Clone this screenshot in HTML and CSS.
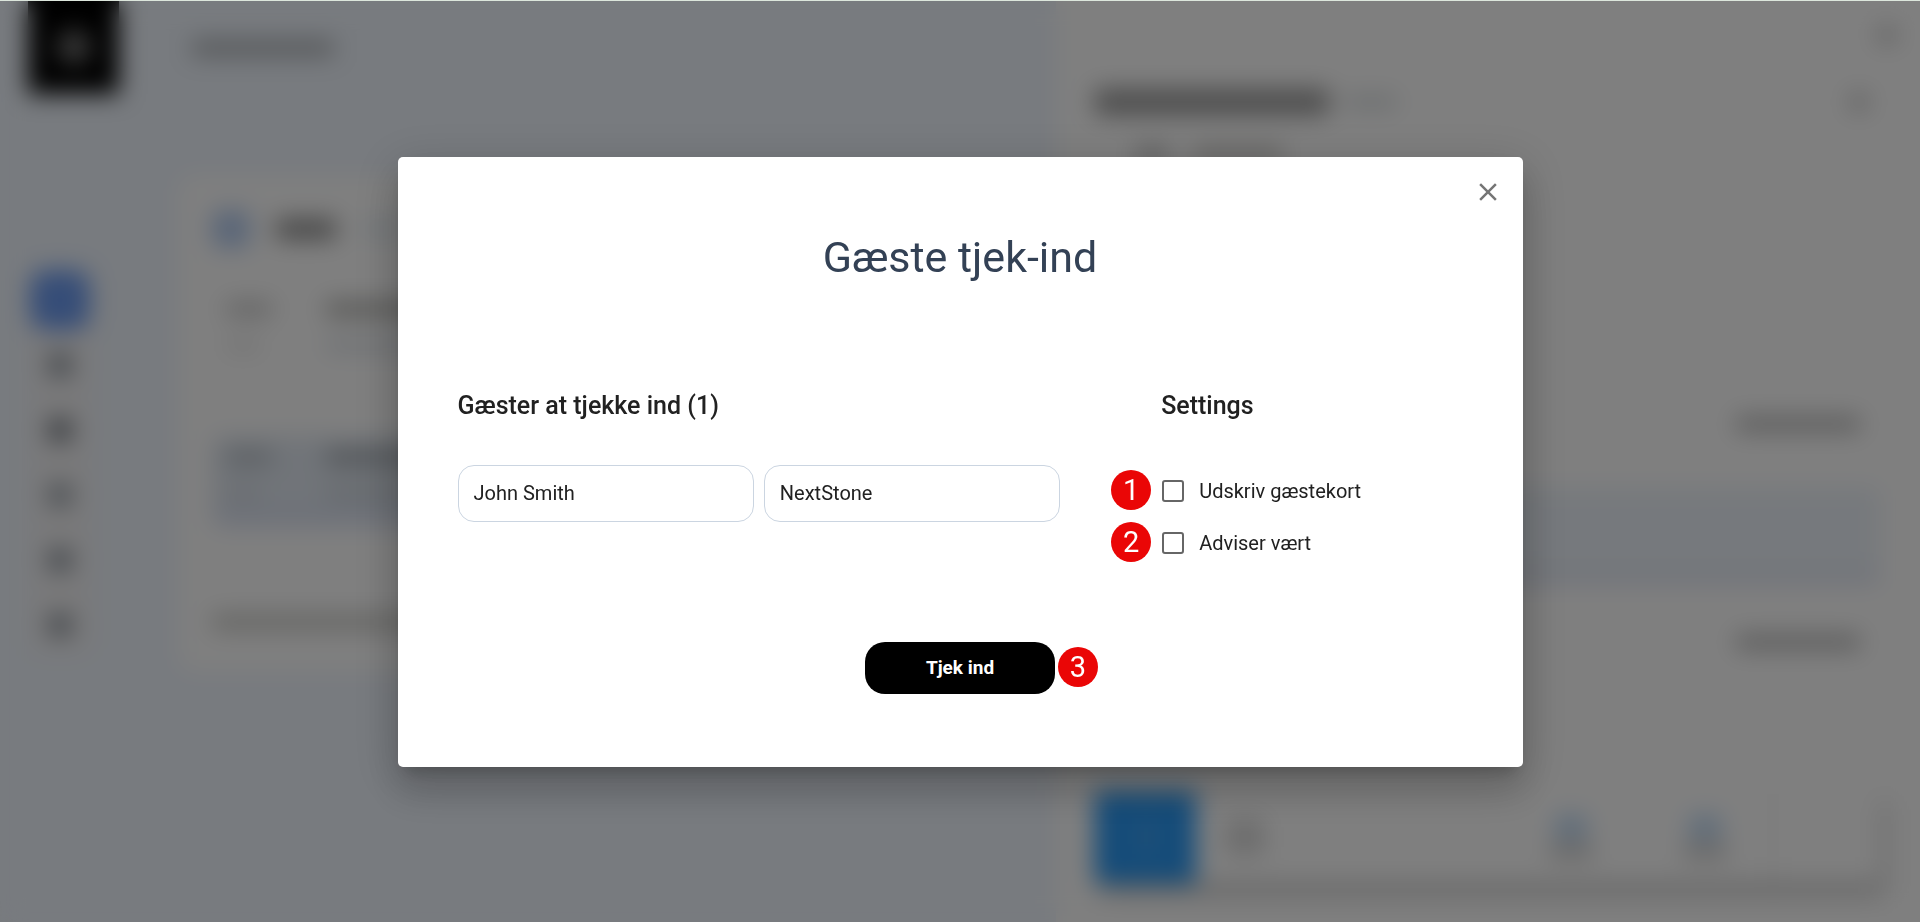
FILE: index.html
```html
<!DOCTYPE html>
<html lang="da">
<head>
<meta charset="utf-8">
<title>Gæste tjek-ind</title>
<link rel="stylesheet" href="styles.css">
</head>
<body>
<div class="app" aria-hidden="true">
  <aside class="sidebar">
    <div class="logo"><span class="logo-mark"></span></div>
    <div class="nav">
      <span class="nav-active"></span>
      <span class="nav-item"></span>
      <span class="nav-item nav-strong"></span>
      <span class="nav-item nav-soft"></span>
      <span class="nav-item"></span>
      <span class="nav-item"></span>
    </div>
  </aside>
  <div class="main">
    <span class="bar crumb"></span>
    <div class="card">
      <div class="card-head"><span class="card-icon"></span><span class="bar card-title"></span><span class="bar card-tag"></span></div>
      <div class="slot">
        <div class="slot-time"><span class="bar"></span><span class="bar faint"></span></div>
        <div class="slot-text"><span class="bar strong"></span><span class="bar cool"></span></div>
      </div>
      <div class="slot slot-on">
        <div class="slot-time"><span class="bar"></span><span class="bar faint"></span></div>
        <div class="slot-text"><span class="bar strong"></span><span class="bar cool"></span></div>
      </div>
      <span class="bar card-foot"></span>
    </div>
  </div>
  <div class="panel">
    <div class="panel-top"><span class="dot"></span></div>
    <div class="panel-head"><span class="bar heading"></span><span class="bar subheading"></span><span class="dot"></span></div>
    <div class="panel-meta"><span class="bar"></span><span class="bar wide"></span></div>
    <div class="action"><span class="bar"></span></div>
    <div class="band"></div>
    <div class="action"><span class="bar"></span></div>
    <div class="toolbar">
      <span class="tile"><span class="tile-mark"></span></span>
      <span class="tool-label"></span>
      <span class="tool tool-first"><i></i><b></b></span>
      <span class="tool"><i></i><b></b></span>
      <span class="tool tool-last"></span>
    </div>
  </div>
</div>

<div class="overlay">
  <form class="dialog" role="dialog" aria-labelledby="dialog-title">
    <button class="close" type="button" aria-label="Luk">
      <svg viewBox="0 0 24 24" width="30" height="30" fill="currentColor"><path d="M19 6.41 17.59 5 12 10.59 6.41 5 5 6.41 10.59 12 5 17.59 6.41 19 12 13.41 17.59 19 19 17.59 13.41 12z"/></svg>
    </button>
    <h1 class="title" id="dialog-title">Gæste tjek-ind</h1>
    <div class="columns">
      <section>
        <h2 class="subtitle">Gæster at tjekke ind (1)</h2>
        <div class="fields">
          <input class="field" type="text" value="John Smith" aria-label="Navn">
          <input class="field" type="text" value="NextStone" aria-label="Firma">
        </div>
      </section>
      <section>
        <h2 class="subtitle">Settings</h2>
        <div class="option">
          <input class="check" type="checkbox" id="print"><label for="print">Udskriv gæstekort</label>
          <span class="step step-before">1</span>
        </div>
        <div class="option">
          <input class="check" type="checkbox" id="notify"><label for="notify">Adviser vært</label>
          <span class="step step-before">2</span>
        </div>
      </section>
    </div>
    <div class="actions">
      <div class="submit-wrap">
        <button class="submit" type="submit">Tjek ind</button>
        <span class="step step-after">3</span>
      </div>
    </div>
  </form>
</div>
</body>
</html>
```
FILE: styles.css
```css
* { box-sizing: border-box; }

body {
  margin: 0;
  font-family: Roboto, "Liberation Sans", sans-serif;
  color: #212121;
  background: #f0f6fe;
  overflow: hidden;
}

/* Page behind the dialog */
.app {
  display: grid;
  grid-template-columns: 178px minmax(0, 1fr) 45%;
  height: 100vh;
  background: #f0f6fe;
  overflow: hidden;
}

.bar {
  display: block;
  height: 14px;
  border-radius: 4px;
  background: #c4c4c4;
}

.sidebar { padding-left: 28px; }
.logo {
  display: flex;
  justify-content: center;
  align-items: center;
  width: 91px;
  height: 94px;
  background: #000;
}
.logo-mark { width: 34px; height: 34px; border-radius: 50%; background: #777; }
.nav {
  display: flex;
  flex-direction: column;
  align-items: center;
  gap: 41px;
  width: 64px;
  margin-top: 176px;
  padding-bottom: 16px;
  border-radius: 16px;
  background: #f3f3f5;
}
.nav-active {
  width: 60px;
  height: 60px;
  margin-bottom: -18px;
  border-radius: 16px;
  background: #6c9bf0;
}
.nav-item { width: 24px; height: 24px; border-radius: 8px; background: #8c949d; }
.nav-strong { background: #747a82; }
.nav-soft { background: #98a0a8; }

.main { padding: 40px 24px 0 0; }
.crumb { width: 142px; height: 16px; margin-left: 14px; background: #aaaeb2; }
.card {
  height: 497px;
  margin-top: 119px;
  padding: 36px 34px;
  border-radius: 16px;
  background: #fff;
}
.card-head { display: flex; align-items: center; gap: 26px; height: 36px; }
.card-icon { width: 38px; height: 38px; border-radius: 8px; background: #b4ccf0; }
.card-title { width: 60px; height: 20px; background: #8c8c8c; }
.card-tag { width: 40px; height: 16px; background: #e6eef4; }
.slot {
  display: grid;
  grid-template-columns: 84px 1fr;
  gap: 16px;
  height: 90px;
  margin-top: 41px;
  padding: 14px 0 0 14px;
  border-radius: 12px;
}
.slot-on { margin-top: 58px; background: #e2e9f2; border-bottom: 16px solid #d8e0f2; }
.slot-time, .slot-text { display: flex; flex-direction: column; gap: 22px; }
.slot-time .bar { width: 46px; background: #c4c4c4; }
.slot-time .faint { width: 34px; background: #e8e8e8; }
.slot .strong { width: 160px; background: #a8a8a4; }
.slot .cool { width: 140px; background: #dde2e8; }
.slot-on .strong { background: #9ca2a8; }
.slot-on .cool { background: #cbd2da; }
.slot-on .slot-time .bar { background: #b4bbc2; }
.slot-on .slot-time .faint { background: #d4dae2; }
.card-foot { width: 220px; height: 16px; margin-top: 88px; background: #cacac6; }

.panel {
  display: flex;
  flex-direction: column;
  padding: 26px 40px 39px 39px;
  background: #fff;
}
.dot { width: 18px; height: 18px; border-radius: 4px; background: #c4c4c4; }
.panel-top { display: flex; justify-content: flex-end; margin-right: -16px; }
.panel-head { display: flex; align-items: center; gap: 16px; margin-top: 45px; padding-right: 12px; }
.heading { width: 234px; height: 26px; background: #9a9a9a; }
.subheading { width: 52px; height: 14px; background: #d8dddf; }
.panel-head .dot { margin-left: auto; }
.panel-meta { display: flex; gap: 24px; margin: 32px 0 256px 40px; }
.panel-meta .bar { width: 34px; background: #b8b8b8; }
.panel-meta .wide { width: 90px; background: #c4c2be; }
.action { display: flex; justify-content: flex-end; padding-right: 20px; }
.action .bar { width: 124px; background: #b2b2b2; }
.band {
  height: 97px;
  margin: 56px 0 51px;
  border-bottom: 12px solid #dfe5f4;
  border-radius: 8px;
  background: #edf3fa;
}
.toolbar {
  display: flex;
  align-items: center;
  height: 92px;
  margin-top: auto;
  border-radius: 4px;
  background: #fff;
  box-shadow: 4px 10px 14px rgba(0, 0, 0, .28);
}
.tile {
  display: flex;
  justify-content: center;
  align-items: center;
  align-self: stretch;
  width: 101px;
  background: #2a98f3;
}
.tile-mark { width: 12px; height: 32px; background: #4aa4ee; }
.tool-label { width: 38px; height: 36px; margin-left: 30px; background: #dadada; }
.tool { display: flex; flex-direction: column; align-items: center; gap: 6px; width: 134px; }
.tool-first { margin-left: auto; }
.tool i { width: 32px; height: 22px; background: #b8d6f4; }
.tool b { width: 42px; height: 14px; background: #c8c8c8; }
.tool-last { align-self: stretch; width: 108px; border-left: 2px solid #e6e6e6; }

/* Dialog */
.overlay {
  position: fixed;
  inset: 0;
  display: flex;
  justify-content: center;
  align-items: center;
  padding: 0 24px;
  border-top: 1px solid #dce6dc;
  background: rgba(0, 0, 0, .5);
  background-clip: padding-box;
  backdrop-filter: blur(12px);
}
.dialog {
  position: relative;
  width: 100%;
  max-width: 1125px;
  padding: 74px 60px 73px;
  border-radius: 5px;
  background: #fff;
  box-shadow: 0 11px 15px -7px rgba(0, 0, 0, .2),
    0 24px 38px 3px rgba(0, 0, 0, .14),
    0 9px 46px 8px rgba(0, 0, 0, .12);
}
.close {
  position: absolute;
  top: 20px;
  right: 20px;
  display: flex;
  padding: 0;
  border: 0;
  background: none;
  color: #757575;
  cursor: pointer;
}
.title {
  margin: 0;
  font-size: 43px;
  line-height: 52px;
  font-weight: 400;
  text-align: center;
  color: #334155;
}
.columns {
  display: grid;
  grid-template-columns: 2fr 1fr;
  gap: 101px;
  margin-top: 108px;
}
.subtitle { margin: 0 0 44px; font-size: 25px; line-height: 30px; font-weight: 500; }
.fields { display: grid; grid-template-columns: 1fr 1fr; gap: 10px; }
.field {
  min-width: 0;
  height: 57px;
  padding: 0 15px;
  border: 1px solid #cbd5e1;
  border-radius: 16px;
  background: #fff;
  color: #212121;
  font: 400 20px/28px Roboto, "Liberation Sans", sans-serif;
}
.option {
  position: relative;
  display: flex;
  align-items: center;
  gap: 15px;
  height: 52px;
  font-size: 20px;
}
.check {
  appearance: none;
  width: 22px;
  height: 22px;
  margin: 0 0 0 1px;
  border: 2px solid #666;
  border-radius: 3px;
  background: #fff;
}
.step {
  position: absolute;
  top: 50%;
  display: flex;
  justify-content: center;
  align-items: center;
  width: 40px;
  height: 40px;
  margin-top: -21px;
  border-radius: 50%;
  background: #ea0606;
  color: #fff;
  font: 400 29px/40px Roboto, "Liberation Sans", sans-serif;
}
.step-before { left: -50px; }
.step-after { left: 100%; margin-left: 3px; }
.actions { display: flex; justify-content: center; margin-top: 73px; }
.submit-wrap { position: relative; }
.submit {
  display: block;
  width: 190px;
  height: 52px;
  padding: 0;
  border: 0;
  border-radius: 20px;
  background: #000;
  color: #fff;
  font: 700 19px/28px Roboto, "Liberation Sans", sans-serif;
  cursor: pointer;
}
```
